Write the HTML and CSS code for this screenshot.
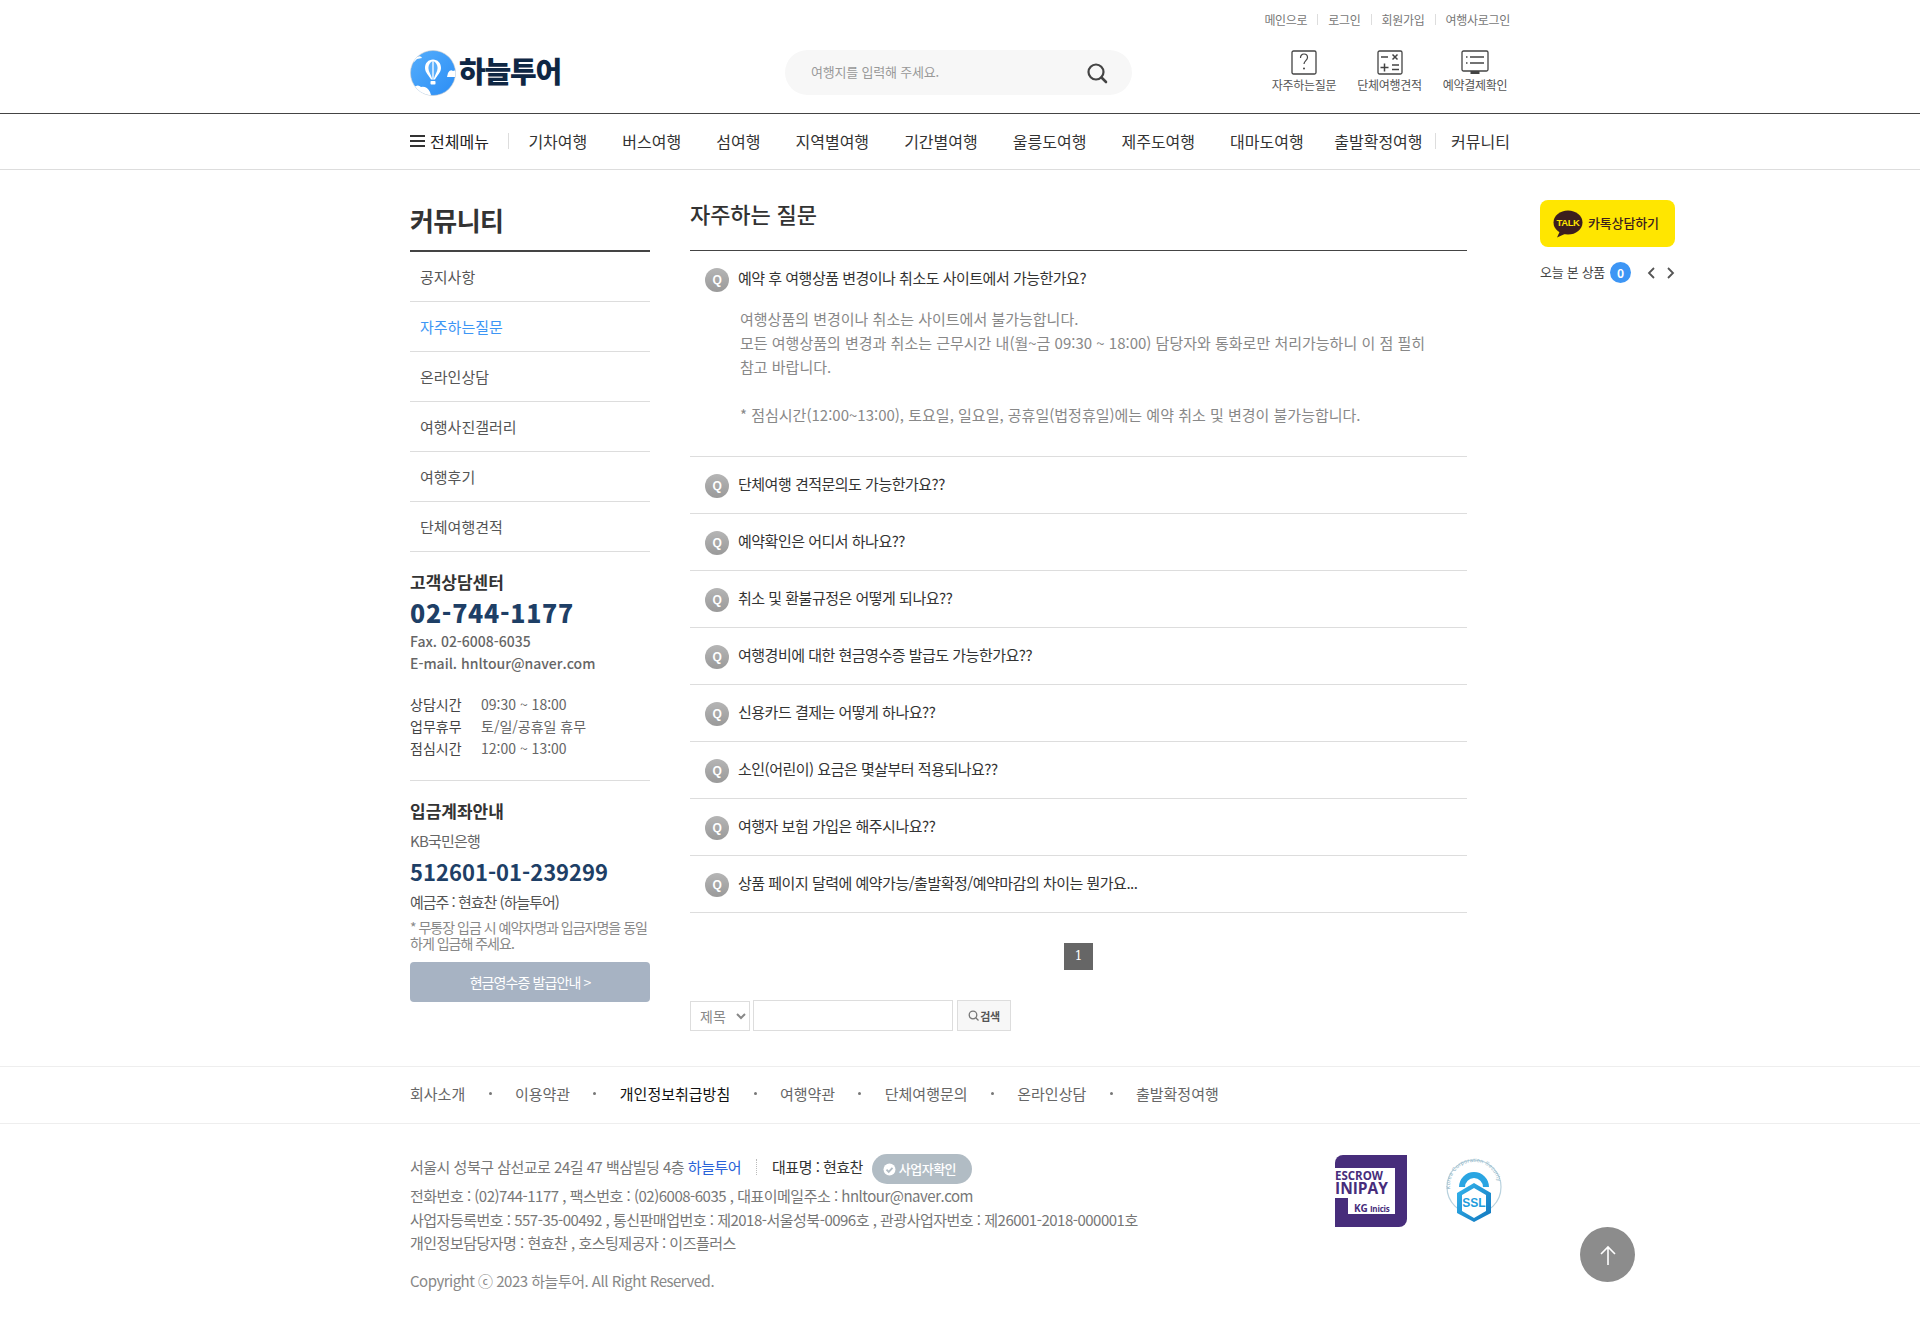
FILE: index.html
```html
<!DOCTYPE html>
<html lang="ko">
<head>
<meta charset="utf-8">
<title>하늘투어 자주하는 질문</title>
<link rel="stylesheet" href="styles.css">
</head>
<body>
<header class="site-header">
  <div class="wrap util">
    <a>메인으로</a><i></i><a>로그인</a><i></i><a>회원가입</a><i></i><a>여행사로그인</a>
  </div>
  <div class="wrap head-main">
    <div class="logo">
      <svg class="logo-mark" width="46" height="46" viewBox="0 0 46 46">
        <defs><linearGradient id="sky" x1="0" y1="0" x2="1" y2="1"><stop offset="0" stop-color="#55aefc"/><stop offset="1" stop-color="#2b8df5"/></linearGradient>
        <clipPath id="cc"><circle cx="23" cy="23" r="22.500"/></clipPath></defs>
        <circle cx="23" cy="23" r="22.500" fill="url(#sky)" stroke="#ccc" stroke-width=".6"/>
        <g clip-path="url(#cc)" fill="#fff">
          <path d="M0 10 Q4 5 7 7 Q11 5 12 8 L7 9 L4 12 Z"/>
          <path d="M38 23 Q40 19 43 21 Q47 19 47 27 L37 27 Z"/>
          <path d="M4 37 Q8 34 11 37 Q17 36 20 42 L22 48 L4 48 Z"/>
        </g>
        <path d="M23 9.500c-4.600 0-8 3.500-8 8.500 0 4.500 4 7.500 6 11.500h4c2-4 6-7 6-11.500 0-5-3.400-8.500-8-8.500z" fill="#fff"/>
        <path d="M23 11c-2.900 1-4.600 3.700-4.600 7 0 3.500 2.800 7 3.700 10.500h1.800c.9-3.500 3.700-7 3.700-10.500 0-3.300-1.700-6-4.600-7z" fill="#5aaefb"/>
        <path d="M23 11v17.500" stroke="#fff" stroke-width="1.300"/>
        <rect x="20.500" y="31" width="5" height="3.500" rx=".8" fill="#fff"/>
      </svg>
      <span class="logo-text">하늘투어</span>
    </div>
    <div class="search">
      <span class="search-ph">여행지를 입력해 주세요.</span>
      <svg width="22" height="22" viewBox="0 0 22 22" fill="none" stroke="#444" stroke-width="2.200"><circle cx="10" cy="10" r="7.500"/><path d="M15.500 15.500L20 20" stroke-linecap="round" stroke-width="2.600"/></svg>
    </div>
    <div class="shortcuts">
      <a class="shortcut">
        <svg width="26" height="25" viewBox="0 0 26 25" fill="none" stroke="#444"><rect x="1" y="1" width="24" height="23" rx="1.500" stroke-width="1.300"/><path d="M9.500 8c0-2.500 1.500-4 3.500-4s3.500 1.400 3.500 3.500c0 3-3.500 3.300-3.500 6.500" stroke-width="1.200"/><circle cx="13" cy="18.500" r="1" fill="#444" stroke="none"/></svg>
        <span>자주하는질문</span>
      </a>
      <a class="shortcut">
        <svg width="26" height="25" viewBox="0 0 26 25" fill="none" stroke="#444"><rect x="1" y="1" width="24" height="23" rx="1.500" stroke-width="1.300"/><path d="M4 7h7M15.500 4.500l5 5M20.500 4.500l-5 5M3.500 17.500h8M7.500 13.500v8M15 15h7M15 19.500h7" stroke-width="1.500"/></svg>
        <span>단체여행견적</span>
      </a>
      <a class="shortcut">
        <svg width="28" height="25" viewBox="0 0 28 25" fill="none" stroke="#444"><rect x="1" y="1" width="26" height="20" rx="1.500" stroke-width="1.300"/><path d="M9 7h14M9 13h14M5 7h1.500M5 13h1.500" stroke-width="1.300"/><rect x="9.500" y="21" width="9" height="3" fill="#444" stroke="none"/></svg>
        <span>예약결제확인</span>
      </a>
    </div>
  </div>
  <nav class="gnb">
    <div class="wrap gnb-in">
      <a class="all"><span class="burger"><b></b><b></b><b></b></span>전체메뉴</a>
      <i class="sep first"></i>
      <a>기차여행</a><a>버스여행</a><a>섬여행</a><a>지역별여행</a><a>기간별여행</a><a>울릉도여행</a><a>제주도여행</a><a>대마도여행</a><a class="depart">출발확정여행</a>
      <i class="sep last"></i>
      <a class="comm">커뮤니티</a>
    </div>
  </nav>
</header>

<div class="wrap content">
  <aside class="side">
    <h2 class="side-title">커뮤니티</h2>
    <ul class="side-menu">
      <li>공지사항</li>
      <li class="on">자주하는질문</li>
      <li>온라인상담</li>
      <li>여행사진갤러리</li>
      <li>여행후기</li>
      <li>단체여행견적</li>
    </ul>
    <section class="cs">
      <h3>고객상담센터</h3>
      <p class="tel">02-744-1177</p>
      <p class="fax">Fax. 02-6008-6035</p>
      <p class="fax">E-mail. hnltour@naver.com</p>
      <dl class="hours">
        <div><dt>상담시간</dt><dd>09:30 ~ 18:00</dd></div>
        <div><dt>업무휴무</dt><dd>토/일/공휴일 휴무</dd></div>
        <div><dt>점심시간</dt><dd>12:00 ~ 13:00</dd></div>
      </dl>
    </section>
    <section class="bank">
      <h3>입금계좌안내</h3>
      <p class="bank-name">KB국민은행</p>
      <p class="account">512601-01-239299</p>
      <p class="holder">예금주 : 현효찬 (하늘투어)</p>
      <p class="note">* 무통장 입금 시 예약자명과 입금자명을 동일하게 입금해 주세요.</p>
      <a class="receipt">현금영수증 발급안내 &gt;</a>
    </section>
  </aside>

  <main class="main">
    <h2 class="main-title">자주하는 질문</h2>
    <ul class="faq">
      <li class="open">
        <div class="q"><span class="qi">Q</span>예약 후 여행상품 변경이나 취소도 사이트에서 가능한가요?</div>
        <div class="a">여행상품의 변경이나 취소는 사이트에서 불가능합니다.<br>모든 여행상품의 변경과 취소는 근무시간 내(월~금 09:30 ~ 18:00) 담당자와 통화로만 처리가능하니 이 점 필히<br>참고 바랍니다.<br><br>* 점심시간(12:00~13:00), 토요일, 일요일, 공휴일(법정휴일)에는 예약 취소 및 변경이 불가능합니다.</div>
      </li>
      <li><div class="q"><span class="qi">Q</span>단체여행 견적문의도 가능한가요??</div></li>
      <li><div class="q"><span class="qi">Q</span>예약확인은 어디서 하나요??</div></li>
      <li><div class="q"><span class="qi">Q</span>취소 및 환불규정은 어떻게 되나요??</div></li>
      <li><div class="q"><span class="qi">Q</span>여행경비에 대한 현금영수증 발급도 가능한가요??</div></li>
      <li><div class="q"><span class="qi">Q</span>신용카드 결제는 어떻게 하나요??</div></li>
      <li><div class="q"><span class="qi">Q</span>소인(어린이) 요금은 몇살부터 적용되나요??</div></li>
      <li><div class="q"><span class="qi">Q</span>여행자 보험 가입은 해주시나요??</div></li>
      <li><div class="q"><span class="qi">Q</span>상품 페이지 달력에 예약가능/출발확정/예약마감의 차이는 뭔가요...</div></li>
    </ul>
    <div class="paging"><span>1</span></div>
    <form class="board-search">
      <select class="bs-select"><option>제목</option></select>
      <input class="bs-input" type="text">
      <button class="bs-btn" type="button"><svg width="11" height="11" viewBox="0 0 11 11" fill="none" stroke="#777" stroke-width="1.300"><circle cx="5" cy="5" r="3.800"/><path d="M8 8l2.500 2.500"/></svg>검색</button>
    </form>
  </main>

  <aside class="quick">
    <a class="kakao">
      <svg width="30" height="28" viewBox="0 0 30 28"><ellipse cx="15" cy="12.500" rx="14.500" ry="12" fill="#3c1e1e"/><path d="M7 21L4 27.500 14 23z" fill="#3c1e1e"/><text x="15" y="16" text-anchor="middle" class="talk">TALK</text></svg>
      <span class="kakao-label">카톡상담하기</span>
    </a>
    <div class="today">
      <span class="today-label">오늘 본 상품</span><b>0</b>
      <svg width="10" height="14" viewBox="0 0 10 14" fill="none" stroke="#555" stroke-width="1.800" class="ar1"><path d="M8 2L3 7l5 5"/></svg>
      <svg width="10" height="14" viewBox="0 0 10 14" fill="none" stroke="#555" stroke-width="1.800" class="ar2"><path d="M2 2l5 5-5 5"/></svg>
    </div>
  </aside>
</div>

<footer class="site-footer">
  <div class="f-links">
    <div class="wrap f-links-in">
      <a>회사소개</a><i></i><a>이용약관</a><i></i><a class="strong">개인정보취급방침</a><i></i><a>여행약관</a><i></i><a>단체여행문의</a><i></i><a>온라인상담</a><i></i><a>출발확정여행</a>
    </div>
  </div>
  <div class="wrap f-info">
    <div class="f-text">
      <p class="f-first">서울시 성북구 삼선교로 24길 47 백삼빌딩 4층 <a class="f-blue">하늘투어</a><i class="f-dots"></i><span class="f-ceo">대표명 : 현효찬</span><a class="f-pill"><svg width="13" height="13" viewBox="0 0 13 13"><circle cx="6.500" cy="6.500" r="6" fill="#fff"/><path d="M3.500 6.700l2.200 2.200 3.800-4" fill="none" stroke="#b1bcc4" stroke-width="1.800"/></svg>사업자확인</a></p>
      <p>전화번호 : (02)744-1177 , 팩스번호 : (02)6008-6035 , 대표이메일주소 : hnltour@naver.com</p>
      <p>사업자등록번호 : 557-35-00492 , 통신판매업번호 : 제2018-서울성북-0096호 , 관광사업자번호 : 제26001-2018-000001호</p>
      <p>개인정보담당자명 : 현효찬 , 호스팅제공자 : 이즈플러스</p>
      <p class="copy">Copyright ⓒ 2023 하늘투어. All Right Reserved.</p>
    </div>
    <div class="f-marks">
      <svg class="escrow" width="72" height="72" viewBox="0 0 72 72">
        <path d="M8 0H72V64a8 8 0 0 1-8 8H0V8a8 8 0 0 1 8-8z" fill="#472d7b"/>
        <path d="M0 13H60V59H13V43H0z" fill="#fff"/>
        <text class="esc1"><tspan x="0" y="25">ESCROW</tspan><tspan x="0" y="39" class="esc2">INIPAY</tspan></text>
        <text x="19" y="57" class="esc3">KG <tspan class="esc4">Inicis</tspan></text>
      </svg>
      <svg class="ssl" width="56" height="64" viewBox="0 0 56 64">
        <defs><path id="arc" d="M5.400 36A24 24 0 1 1 50.600 36"/><linearGradient id="shg" x1="0" y1="0" x2="1" y2="1"><stop offset="0" stop-color="#35b6ee"/><stop offset="1" stop-color="#1176bd"/></linearGradient></defs>
        <circle cx="28" cy="29" r="27" fill="none" stroke="#b9d2de" stroke-width="1.200"/>
        <text class="ssl-arc"><textPath href="#arc" startOffset="5">Korea Corporation Security</textPath></text>
        <path d="M13 29a15 15 0 0 1 30 0h-6a9 9 0 0 0-18 0z" fill="#2aa5e2"/>
        <path d="M28 25L45 35V55L28 64 11 55V35z" fill="url(#shg)"/>
        <path d="M28 30L40 37V53L28 60 16 53V37z" fill="#fff"/>
        <text x="28" y="49" text-anchor="middle" class="ssl-t">SSL</text>
      </svg>
    </div>
  </div>
</footer>

<a class="to-top"><svg width="20" height="22" viewBox="0 0 20 22" fill="none" stroke="#fff" stroke-width="1.600"><path d="M10 21V3M3 10l7-7 7 7"/></svg></a>
</body>
</html>
```

FILE: styles.css
```css
* { box-sizing: border-box; margin: 0; padding: 0; }
html, body { background: #fff; }
body { font-family: "Noto Sans CJK KR", "Noto Sans", sans-serif; font-size: 15px; color: #555; height: 1322px; overflow: hidden; }
ul { list-style: none; }
a { color: inherit; text-decoration: none; }
i { font-style: normal; }
.wrap { width: 1100px; margin: 0 auto; }

/* header */
.util { height: 40px; padding-bottom: 2px; display: flex; justify-content: flex-end; align-items: center; font-size: 12px; color: #777; letter-spacing: -0.3px; }
.util i { width: 1px; height: 11px; background: #ddd; margin: 0 10px; }
.head-main { height: 73px; display: flex; align-items: flex-start; padding-top: 10px; }
.site-header { border-bottom: 1px solid #ddd; }
.logo { width: 375px; height: 46px; display: flex; align-items: center; gap: 3px; }
.logo-text { font-size: 29px; font-weight: 900; color: #0f2744; letter-spacing: -1.200px; line-height: 46px; margin-top: -7px; }
.search { width: 347px; height: 45px; border-radius: 23px; background: #f7f7f7; display: flex; align-items: center; justify-content: space-between; padding: 0 24px 0 26px; }
.search-ph { font-size: 13px; color: #999; letter-spacing: -0.2px; padding-bottom: 2px; }
.shortcuts { margin-left: auto; display: flex; gap: 15.500px; }
.shortcut { display: flex; flex-direction: column; align-items: center; font-size: 12px; color: #555; width: 70px; letter-spacing: -0.3px; }
.shortcut span { line-height: 18px; margin-top: 1px; white-space: nowrap; }
.gnb { border-top: 1px solid #444; height: 56px; }
.gnb-in { display: flex; align-items: center; height: 55px; padding-bottom: 2px; font-size: 16px; color: #333; }
.gnb-in a { white-space: nowrap; }
.gnb-in a + a { margin-left: 35.050px; }
.gnb-in a.depart { margin-left: 30.500px; }
.gnb-in a.comm { margin-left: auto; }
.all { display: flex; align-items: center; gap: 5px; color: #222; }
.burger { display: flex; flex-direction: column; gap: 3px; width: 15px; }
.burger b { height: 2px; background: #333; display: block; }
.sep { width: 1px; height: 16px; background: #ddd; }
.sep.first { margin: 0 19.500px 0 19px; }
.sep.last { margin-left: 12px; }

/* content */
.content { display: flex; gap: 40px; position: relative; padding-bottom: 35px; align-items: flex-start; }
.side { width: 240px; flex: none; }
.side-title { padding-top: 30px; height: 82px; font-size: 26px; line-height: 40px; font-weight: 700; color: #333; border-bottom: 2px solid #444; letter-spacing: -0.6px; }
.side-menu li { height: 50px; line-height: 49px; padding-left: 10px; border-bottom: 1px solid #ddd; color: #555; }
.side-menu li.on { color: #3d96f5; }
.cs { padding: 17.500px 0 21.500px; border-bottom: 1px solid #ddd; }
.cs h3, .bank h3 { font-size: 17px; font-weight: 700; color: #333; line-height: 24px; }
.tel { font-size: 25px; font-weight: 900; color: #1e3f66; line-height: 36px; letter-spacing: 0.7px; }
.fax { font-size: 14px; line-height: 22px; font-weight: 500; color: #666; }
.fax + .fax { margin-bottom: 19px; }
.hours div { display: flex; line-height: 22px; font-size: 14px; }
.hours dt { width: 71px; color: #444; }
.hours dd { color: #666; }
.bank { padding-top: 18px; }
.bank-name { line-height: 24px; margin-top: 6px; color: #666; letter-spacing: -0.8px; }
.account { font-size: 22px; font-weight: 700; color: #1e3f66; line-height: 37px; }
.holder { line-height: 24px; color: #555; letter-spacing: -1px; }
.note { font-size: 14px; line-height: 16px; color: #888; letter-spacing: -1px; margin-top: 5px; }
.receipt { display: block; height: 40px; line-height: 40px; margin-top: 11px; text-align: center; background: #a7b3c3; border-radius: 4px; color: #fff; font-size: 14px; letter-spacing: -0.9px; }

/* main */
.main { width: 777px; flex: none; }
.main-title { padding-top: 21.500px; height: 81px; font-size: 22px; line-height: 42px; font-weight: 500; color: #333; border-bottom: 1px solid #444; letter-spacing: -0.1px; }
.faq li { border-bottom: 1px solid #ddd; padding: 0 15px; min-height: 57px; }
.faq li .q { display: flex; align-items: center; height: 56px; padding-bottom: 3px; color: #333; gap: 9px; letter-spacing: -0.5px; }
.faq li.open .q { padding-bottom: 4px; }
.qi { width: 24px; height: 24px; flex: none; border-radius: 50%; background: linear-gradient(#b5b5b5, #9a9a9a); color: #fff; font-size: 12px; font-weight: 700; display: flex; align-items: center; justify-content: center; font-family: "Liberation Sans", sans-serif; margin-top: 5px; }
.faq .open { padding-bottom: 29px; }
.a { padding-left: 35px; line-height: 24px; color: #888; white-space: nowrap; }
.paging { display: flex; justify-content: center; margin-top: 30px; }
.paging span { width: 29px; height: 27px; background: #666; color: #fff; font: 400 12px/27px "DejaVu Serif", serif; text-align: center; }
.board-search { display: flex; align-items: flex-end; margin-top: 30px; gap: 3px; height: 31px; }
.bs-select { width: 60px; height: 30px; border: 1px solid #ddd; background: #fff; color: #888; font: 14px "Noto Sans CJK KR", sans-serif; padding-left: 5px; border-radius: 0; }
.bs-input { width: 200px; height: 31px; border: 1px solid #ddd; background: #fff; }
.bs-btn { width: 54px; height: 31px; margin-left: 1px; border: 1px solid #ddd; background: #f7f7f7; color: #555; font: 700 11px "Noto Sans CJK KR", sans-serif; display: flex; align-items: center; justify-content: center; gap: 1px; letter-spacing: -0.3px; }

/* quick */
.quick { position: absolute; left: 1130px; top: 30px; width: 135px; }
.kakao { display: flex; align-items: center; height: 47px; background: #ffe600; border-radius: 8px; padding-left: 13px; gap: 5px; color: #3c1e1e; font-size: 13px; font-weight: 500; letter-spacing: -0.15px; }
.kakao-label { padding-bottom: 2px; }
.talk { font: 800 9.500px "Liberation Sans", sans-serif; fill: #ffe600; letter-spacing: -0.4px; }
.today { display: flex; align-items: center; height: 21px; margin-top: 15px; font-size: 13px; color: #444; letter-spacing: -0.3px; }
.today-label { white-space: nowrap; flex: none; padding-bottom: 2px; }
.today b { width: 21px; height: 21px; flex: none; border-radius: 50%; background: #3d96f5; color: #fff; text-align: center; line-height: 21px; font-size: 12px; font-weight: 700; margin-left: 5px; }
.ar1 { margin-left: 15px; flex: none; }
.ar2 { margin-left: 10px; flex: none; }

/* footer */
.f-links { border-top: 1px solid #eee; border-bottom: 1px solid #eee; height: 58px; }
.f-links-in { display: flex; align-items: center; height: 56px; padding-bottom: 4px; color: #666; }
.f-links-in i { width: 3px; height: 3px; border-radius: 50%; background: #777; margin: 0 23.350px; }
.strong { color: #111; }
.f-info { display: flex; justify-content: space-between; padding-top: 28px; }
.f-text { line-height: 23.500px; color: #777; letter-spacing: -0.5px; }
.f-first { display: flex; align-items: center; height: 30px; margin-bottom: 2px; white-space: pre; }
.f-blue { color: #2a63d8; }
.f-dots { height: 16px; border-left: 1px dotted #bbb; margin: 0 15px; }
.f-ceo { color: #333; }
.f-pill { display: flex; align-items: center; gap: 3px; height: 30px; width: 100px; padding-right: 5px; justify-content: center; border-radius: 15px; background: #b1bcc4; color: #fff; font-size: 13px; font-weight: 500; margin: 4px 0 0 9px; }
.copy { margin-top: 14px; color: #888; }
.f-marks { display: flex; align-items: flex-start; gap: 39px; margin-right: 8px; margin-top: 3px; }
.ssl { margin-top: 3px; }
.esc1 { font: 700 11.500px "Open Sans", sans-serif; fill: #472d7b; }
.esc2 { font-size: 15.500px; }
.esc3 { font: 700 10px "Open Sans", sans-serif; fill: #472d7b; letter-spacing: -0.2px; }
.esc4 { font-size: 8px; }
.ssl-arc { font: 5.500px "Liberation Sans", sans-serif; fill: #8fb4c6; letter-spacing: 0.3px; }
.ssl-t { font: 700 12px "Liberation Sans", sans-serif; fill: #1f9ddd; }
.to-top { position: fixed; left: 1580px; top: 1227px; width: 55px; height: 55px; border-radius: 50%; background: #8c8c8c; display: flex; align-items: center; justify-content: center; }
```
